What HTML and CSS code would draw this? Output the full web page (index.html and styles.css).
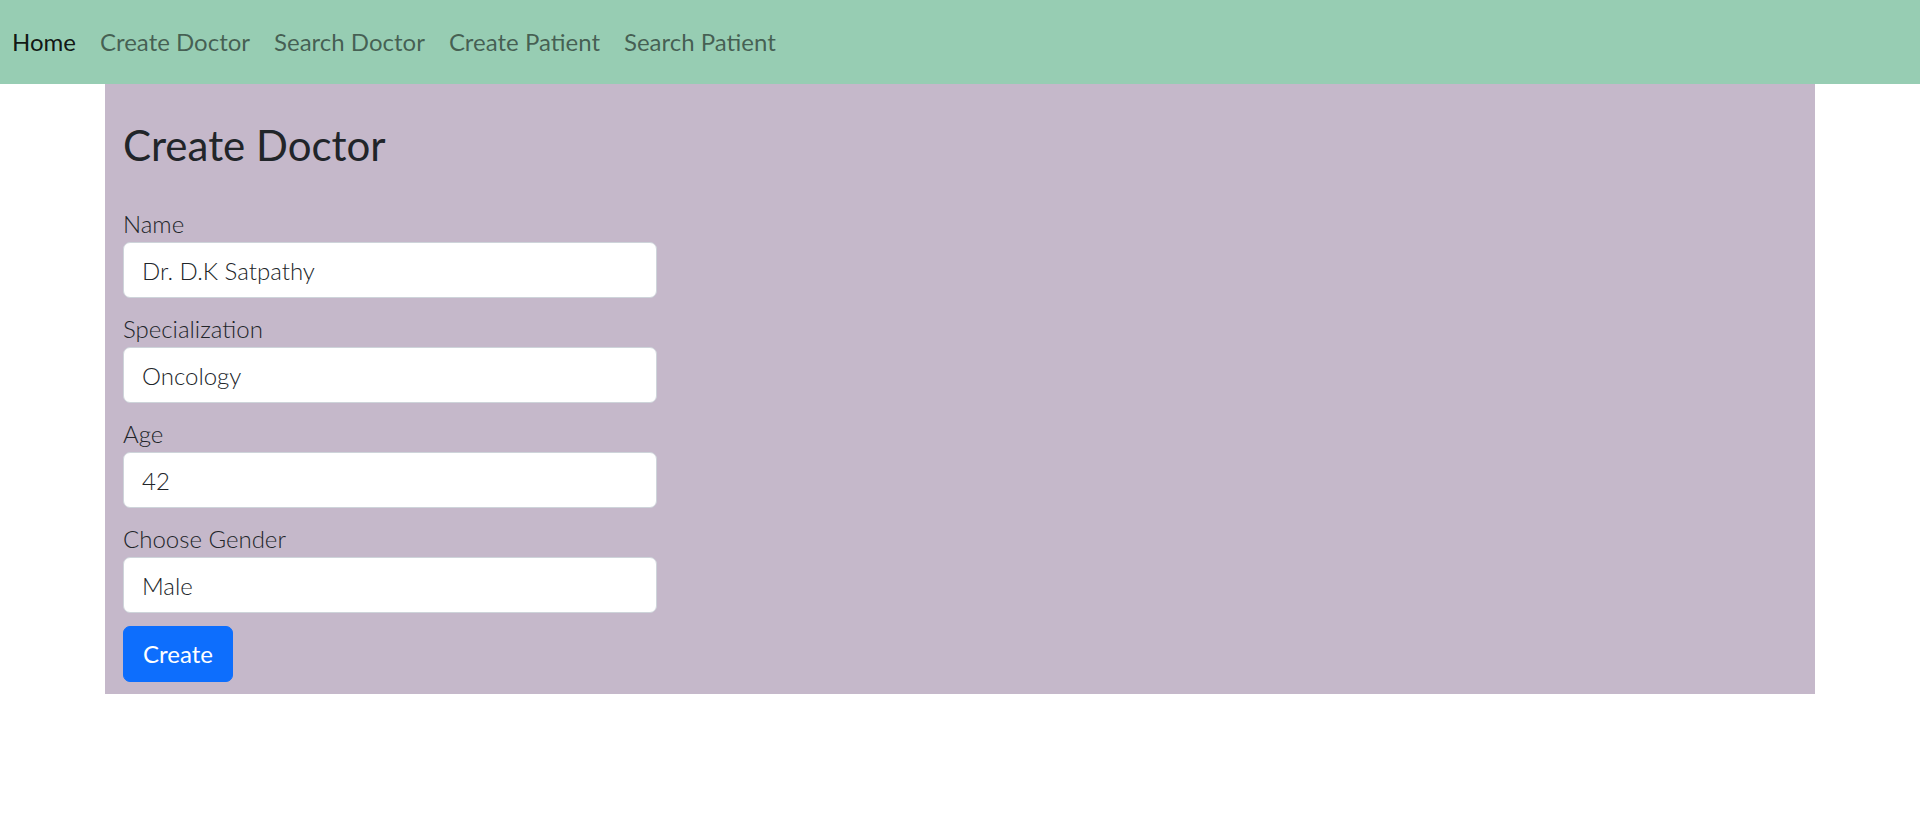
FILE: index.html
```html
<!DOCTYPE html>
<html lang="en">
<head>
<meta charset="utf-8">
<title>Create Doctor</title>
<link rel="stylesheet" href="styles.css">
</head>
<body>
<nav class="navbar">
  <ul class="nav-list">
    <li><a class="nav-link active" href="#">Home</a></li>
    <li><a class="nav-link" href="#">Create Doctor</a></li>
    <li><a class="nav-link" href="#">Search Doctor</a></li>
    <li><a class="nav-link" href="#">Create Patient</a></li>
    <li><a class="nav-link" href="#">Search Patient</a></li>
  </ul>
</nav>
<main class="container">
  <h3 class="title">Create Doctor</h3>
  <form class="form">
    <div class="field">
      <label class="form-label" for="name">Name</label>
      <input class="form-control" id="name" type="text" value="Dr. D.K Satpathy">
    </div>
    <div class="field">
      <label class="form-label" for="spec">Specialization</label>
      <input class="form-control" id="spec" type="text" value="Oncology">
    </div>
    <div class="field">
      <label class="form-label" for="age">Age</label>
      <input class="form-control" id="age" type="text" value="42">
    </div>
    <div class="field">
      <label class="form-label" for="gender">Choose Gender</label>
      <input class="form-control" id="gender" type="text" value="Male">
    </div>
    <button class="btn-primary" type="button">Create</button>
  </form>
</main>
</body>
</html>
```
FILE: styles.css
```css
* { box-sizing: border-box; }
html, body { margin: 0; padding: 0; }
body {
  font-family: "Lato", "Roboto", sans-serif;
  font-size: 24px;
  font-weight: 300;
  line-height: 36px;
  color: #212529;
  background: #ffffff;
}
.navbar {
  background: #97cdb3;
  padding: 12px 0;
}
.nav-list {
  list-style: none;
  margin: 0;
  padding: 0;
  display: flex;
}
.nav-link {
  display: block;
  padding: 12px 12px;
  line-height: 36px;
  text-decoration: none;
  font-weight: 400;
  color: rgba(0, 0, 0, 0.55);
}
.nav-link.active { color: rgba(0, 0, 0, 0.9); }
.container {
  width: 1710px;
  margin: 0 auto;
  background: #c5b8ca;
  padding: 36px 18px 12px;
}
.title {
  margin: 0 0 36px;
  font-size: 42px;
  font-weight: 400;
  line-height: 50.4px;
  color: #212529;
}
.form { width: 534px; }
.field {
  display: flex;
  flex-direction: column;
  margin-bottom: 13px;
}
.form-label {
  line-height: 36px;
  color: #212529;
}
.form-control {
  font: inherit;
  line-height: 36px;
  height: 56px;
  padding: 9px 18px;
  border: 1px solid #ced4da;
  border-radius: 7px;
  background: #ffffff;
  color: #212529;
  width: 100%;
}
.btn-primary {
  font: inherit;
  font-weight: 400;
  line-height: 36px;
  height: 56px;
  padding: 9px 19px;
  border: 1px solid #0d6efd;
  border-radius: 7px;
  background: #0d6efd;
  color: #ffffff;
  cursor: pointer;
}
```
